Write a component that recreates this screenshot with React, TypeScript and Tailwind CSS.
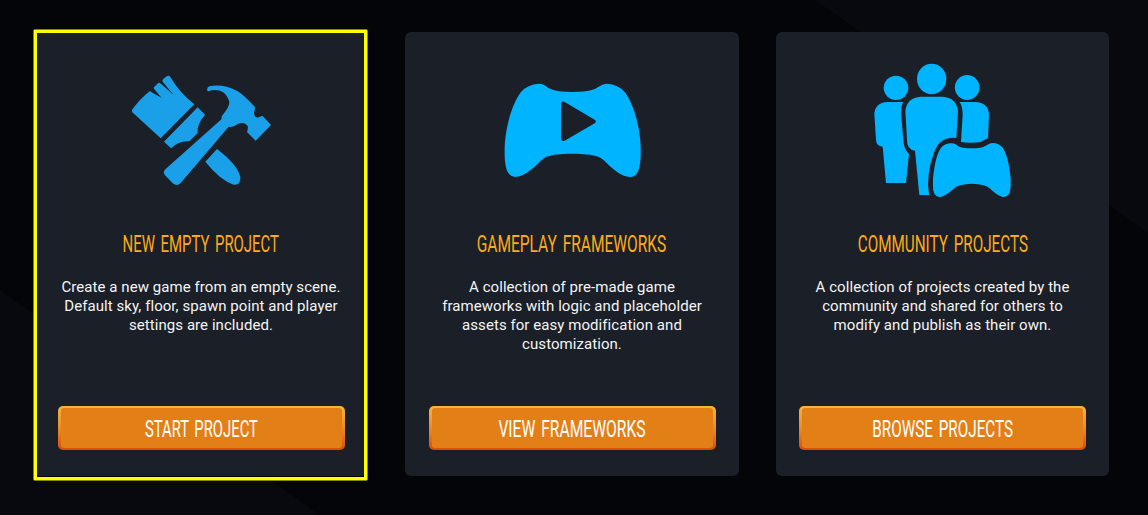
import type { ReactNode } from "react";

function ToolsIcon() {
  return (
    <svg className="h-[130px] w-[165px]" viewBox="0 0 495 390" fill="#1aa0e8">
      <path d="M37 142Q34 138 37 133Q60 101 87 80Q91 77 95 82L125 99L102 71Q100 68 103 65L114 55Q118 52 121 55L161 90L128 50Q126 47 129 43L140 34Q147 30 151 36Q179 84 223 118L122 220Z" />
      <path d="M233 127L255 149Q230 178 233 204L208 229Q178 226 153 250L132 230Z" />
      <path d="M262 77Q259 67 270 63Q310 56 351 77Q369 87 405 126Q405 134 402 144Q404 158 414 158Q420 153 428 153L453 180L407 227L381 201Q385 190 383 183Q373 168 352 178Q339 188 326 185L182 354Q171 366 158 355L134 329Q128 320 136 313L305 162Q303 155 308 150Q334 119 326 104Q314 71 274 76Q264 81 262 77Z" />
      <path d="M291 252L256 290Q300 345 341 359Q363 361 361 337Q354 300 291 252Z" />
    </svg>
  );
}

function GamepadIcon() {
  return (
    <svg className="h-[120px] w-[165px]" viewBox="0 0 495 360" fill="#00b4ff">
      <path
        fillRule="evenodd"
        d="M147 41C166 41 169 55 194 61Q209 66 247 66Q286 66 302 61C326 54 333 41 352 41Q384 43 404 66C435 106 454 190 452 243Q453 280 445 302Q437 321 419 321C397 321 369 299 351 280C332 260 322 252 247 251C172 252 164 260 145 280C126 299 98 321 76 321Q59 320 51 302Q43 280 44 243C43 190 62 106 93 66Q112 43 147 41ZM213 101V208Q216 216 224 212L314 160Q321 154 314 149L224 96Q215 92 213 101Z"
      />
    </svg>
  );
}

function CommunityIcon() {
  return (
    <svg className="h-[150px] w-[165px]" viewBox="0 0 495 450" fill="#00b4ff">
      <ellipse cx="108" cy="98.500" rx="37" ry="36.500" />
      <ellipse cx="215" cy="72" rx="44" ry="45.500" />
      <ellipse cx="321.500" cy="97.500" rx="37" ry="37.500" />
      <path d="M129 141H83Q44 143 43 178L48 254Q49 273 68 275L78 384H138L147 297Q131 282 130 255L123 175Q122 155 129 141Z" />
      <path d="M299 141H345Q386 143 387 179L384 250Q370 256 362 261Q330 266 303 261L308 177Q308 155 299 141Z" />
      <path d="M183 125H248Q290 128 294 169L289 249Q239 244 222 293Q197 359 207 420H178L165 287Q140 284 141 255L136 168Q140 128 183 125Z" />
      <path d="M276 265C292 266 292 277 309 278Q335 281 361 278C378 277 382 264 398 264Q415 264 427 277Q445 301 452 370V393Q451 424 433 426C420 426 401 412 391 401Q378 387 335 386Q293 387 281 401C270 412 250 426 237 426Q218 422 219 393V370Q226 301 244 277Q257 264 276 265Z" />
    </svg>
  );
}

interface CardProps {
  icon: ReactNode;
  title: string;
  titleClass: string;
  lines: string[];
  action: string;
  actionClass: string;
  className: string;
  selected?: boolean;
}

function Card({ icon, title, titleClass, lines, action, actionClass, className, selected }: CardProps) {
  return (
    <article className={`relative flex h-[444px] flex-col items-center rounded-md bg-[#1b1f27] ${className}`}>
      <div className="flex h-[196px] w-full justify-center">{icon}</div>
      <h2 className="flex h-8 items-center justify-center text-[24px] leading-8 [word-spacing:3px] whitespace-nowrap text-[#fdab18]">
        <span className={titleClass}>{title}</span>
      </h2>
      <p className="mt-[18px] h-32 text-center text-[15px] leading-[19px] tracking-[0.06px] whitespace-nowrap text-[#f4f4f5]">
        {lines.map((line) => (
          <span key={line} className="block">{line}</span>
        ))}
      </p>
      <button className="flex h-11 w-[287px] rounded-[5px] bg-linear-to-b from-[#f8b53e] via-[#ec8b25] to-[#d84b05] px-[3px] pt-[2px] pb-[2px] text-[24px] [word-spacing:3px] text-white">
        <span className="flex h-full w-full items-center justify-center rounded-[3px] bg-[#e37f17] pt-[2px] leading-8 whitespace-nowrap">
          <span className={actionClass}>{action}</span>
        </span>
      </button>
      {selected && (
        <span className="absolute -top-[3px] right-0 -bottom-[5px] -left-px rounded-[2px] border border-[#858506]">
          <span className="block h-full w-full border-[3px] border-[#ffff00]" />
        </span>
      )}
    </article>
  );
}

export default function App() {
  return (
    <main className="relative h-[515px] w-[1148px] overflow-hidden bg-[#040508] font-['Roboto',sans-serif]">
      <svg className="absolute inset-0 h-full w-full" viewBox="0 0 1148 515" fill="#08090e">
        <path d="M0 290L320 515H0Z" />
        <path d="M815 0H1148V233Z" />
      </svg>
      <div className="relative flex gap-[37px] pt-8 pl-[34px]">
        <Card
          selected
          className="w-[334px]"
          icon={<div className="mt-[33px] ml-[2px]"><ToolsIcon /></div>}
          title="NEW EMPTY PROJECT"
          titleClass="inline-block scale-x-[0.622]"
          lines={["Create a new game from an empty scene.", "Default sky, floor, spawn point and player", "settings are included."]}
          action="START PROJECT"
          actionClass="inline-block scale-x-[0.618]"
        />
        <Card
          className="w-[334px]"
          icon={<div className="mt-[38px]"><GamepadIcon /></div>}
          title="GAMEPLAY FRAMEWORKS"
          titleClass="inline-block scale-x-[0.647]"
          lines={["A collection of pre-made game", "frameworks with logic and placeholder", "assets for easy modification and", "customization."]}
          action="VIEW FRAMEWORKS"
          actionClass="inline-block scale-x-[0.651]"
        />
        <Card
          className="w-[333px]"
          icon={<div className="mt-[23px]"><CommunityIcon /></div>}
          title="COMMUNITY PROJECTS"
          titleClass="inline-block scale-x-[0.636]"
          lines={["A collection of projects created by the", "community and shared for others to", "modify and publish as their own."]}
          action="BROWSE PROJECTS"
          actionClass="inline-block scale-x-[0.636]"
        />
      </div>
    </main>
  );
}
